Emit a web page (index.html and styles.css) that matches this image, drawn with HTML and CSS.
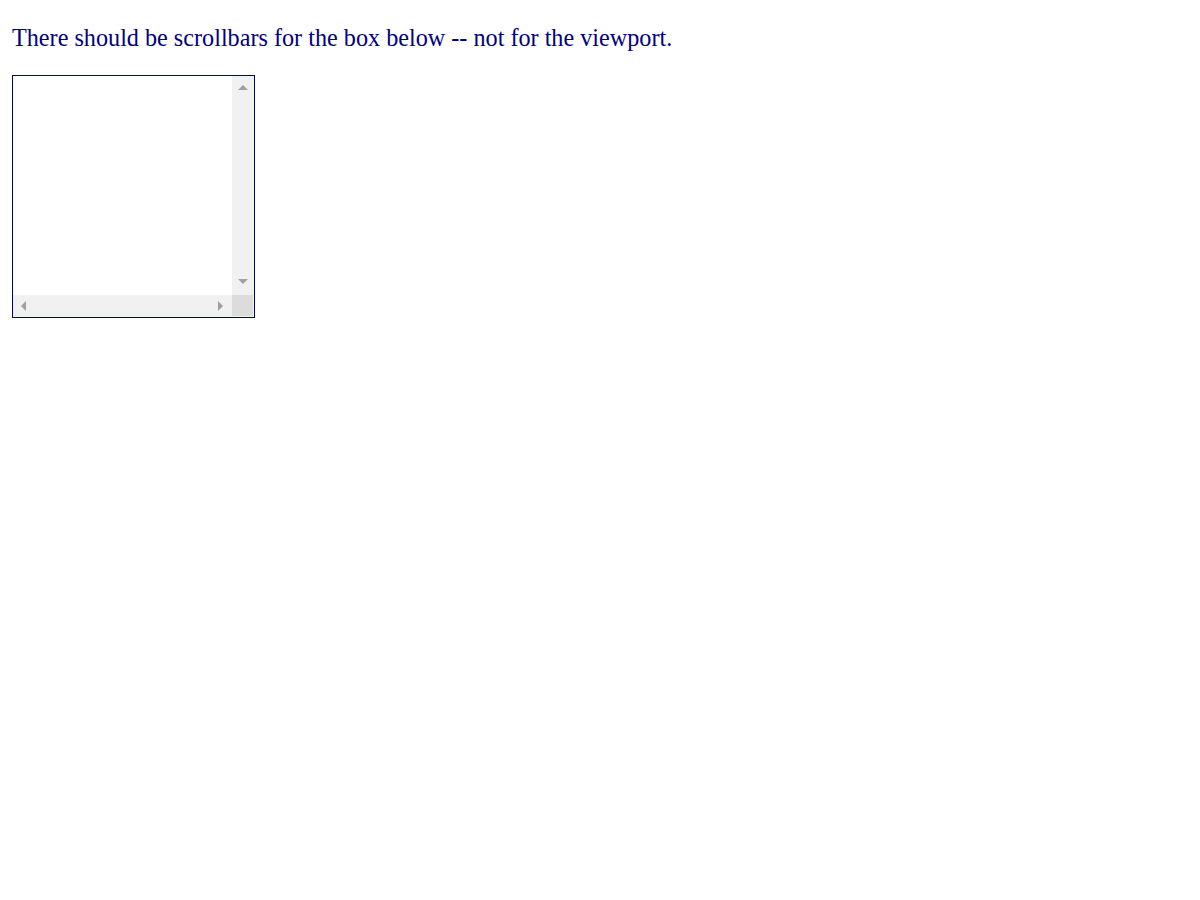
FILE: index.html
```html
<!DOCTYPE html>
<html>
<head>
<meta charset="utf-8">
<link rel="stylesheet" href="styles.css">
</head>
<body class="page">
<p class="note">There should be scrollbars for the box below -- not for the viewport.</p>
<div class="box">
  <div class="box-content"></div>
  <div class="vtrack">
    <svg class="arrow-v" width="10" height="5" viewBox="0 0 10 5"><polygon points="0,5 5,0 10,5" fill="#a0a0a0"/></svg>
    <svg class="arrow-v" width="10" height="5" viewBox="0 0 10 5"><polygon points="0,0 10,0 5,5" fill="#a0a0a0"/></svg>
  </div>
  <div class="htrack">
    <svg class="arrow-h" width="5" height="10" viewBox="0 0 5 10"><polygon points="5,0 5,10 0,5" fill="#a0a0a0"/></svg>
    <svg class="arrow-h" width="5" height="10" viewBox="0 0 5 10"><polygon points="0,0 5,5 0,10" fill="#a0a0a0"/></svg>
  </div>
  <div class="corner"></div>
</div>
</body>
</html>
```
FILE: styles.css
```css
html {
  background: #ffffff;
}
.page {
  margin: 12px;
  font-family: "Liberation Serif", "Times New Roman", serif;
  color: #000080;
}
.note {
  font-size: 24.2px;
  margin: 12px 0 24px;
  line-height: 27px;
}
.box {
  width: 241px;
  height: 241px;
  border: 1px solid #000080;
  display: grid;
  grid-template-columns: 1fr 22px;
  grid-template-rows: 1fr 22px;
  background: #ffffff;
}
.box-content {
  background: #ffffff;
}
.vtrack {
  background: #f1f1f1;
  display: flex;
  flex-direction: column;
  justify-content: space-between;
  align-items: center;
  padding: 9px 0 11px;
}
.htrack {
  background: #f1f1f1;
  display: flex;
  justify-content: space-between;
  align-items: center;
  padding: 0 9px 0 8px;
}
.arrow-v,
.arrow-h {
  display: block;
}
.corner {
  background: #dcdcdc;
  border-right: 1px solid #f1f1f1;
  border-bottom: 1px solid #f1f1f1;
}
```
